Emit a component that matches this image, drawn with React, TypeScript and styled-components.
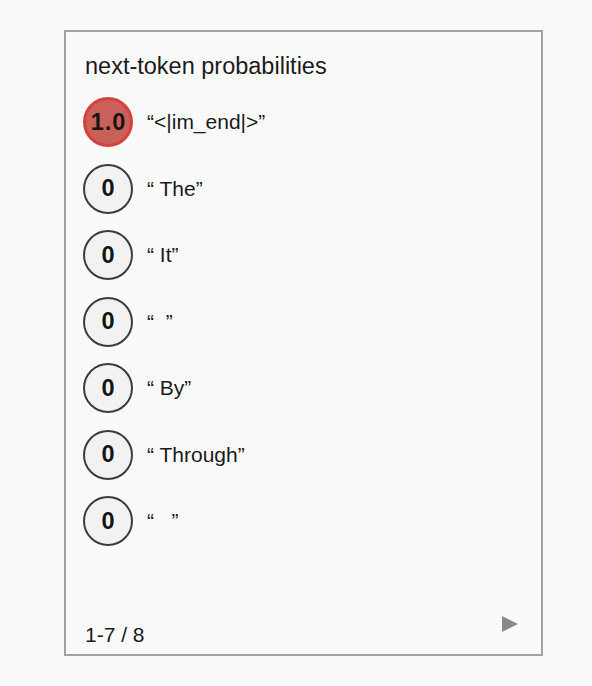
import styled, { createGlobalStyle } from "styled-components";

const GlobalStyle = createGlobalStyle`
  html, body {
    margin: 0;
    padding: 0;
    background-color: #fafafa;
  }
  body {
    font-family: "Liberation Sans", Arial, Helvetica, sans-serif;
    color: #1a1a1a;
  }
`;

const Page = styled.div`
  padding: 30px 0 0 64px;
`;

const Card = styled.div`
  box-sizing: border-box;
  width: 479px;
  height: 626px;
  border: 2px solid #a3a3a3;
  background-color: #fafafa;
  display: flex;
  flex-direction: column;
  padding: 21px 23px 7px 17px;
`;

const Title = styled.div`
  font-size: 23.5px;
  line-height: 26px;
  margin-left: 2px;
  margin-bottom: 18px;
`;

const List = styled.div`
  display: flex;
  flex-direction: column;
  gap: 16.5px;
`;

const Row = styled.div`
  display: flex;
  align-items: center;
  gap: 14px;
  height: 50px;
`;

interface BadgeProps {
  $top: boolean;
}

const Badge = styled.div<BadgeProps>`
  box-sizing: border-box;
  width: 50px;
  height: 50px;
  border-radius: 50%;
  display: flex;
  align-items: center;
  justify-content: center;
  padding-left: 1px;
  font-weight: 700;
  font-size: 23.5px;
  letter-spacing: 1px;
  color: #151515;
  ${(props) =>
    props.$top
      ? "background-color: #c9605a; border: 3px solid #d6423b;"
      : "background-color: #f2f2f2; border: 2px solid #3c3c3c;"}
`;

const Token = styled.div`
  font-size: 21px;
  white-space: pre;
`;

const Footer = styled.div`
  margin-top: auto;
  display: flex;
  justify-content: space-between;
  align-items: flex-end;
  padding-left: 2px;
`;

const Range = styled.div`
  font-size: 21px;
  line-height: 24px;
`;

const NextButton = styled.button`
  border: none;
  background: none;
  padding: 0;
  margin-bottom: 15px;
  cursor: pointer;
  display: flex;
`;

const tokens = [
  { p: "1.0", t: "<|im_end|>" },
  { p: "0", t: " The" },
  { p: "0", t: " It" },
  { p: "0", t: "  " },
  { p: "0", t: " By" },
  { p: "0", t: " Through" },
  { p: "0", t: "   " },
];

export default function App() {
  return (
    <Page>
      <GlobalStyle />
      <Card>
        <Title>next-token probabilities</Title>
        <List>
          {tokens.map((tok, i) => (
            <Row key={i}>
              <Badge $top={i === 0}>{tok.p}</Badge>
              <Token>{"\u201C" + tok.t + "\u201D"}</Token>
            </Row>
          ))}
        </List>
        <Footer>
          <Range>1-7 / 8</Range>
          <NextButton>
            <svg width="16" height="16" viewBox="0 0 16 16">
              <path d="M0 0 L16 8 L0 16 Z" fill="#8a8a8a" />
            </svg>
          </NextButton>
        </Footer>
      </Card>
    </Page>
  );
}
